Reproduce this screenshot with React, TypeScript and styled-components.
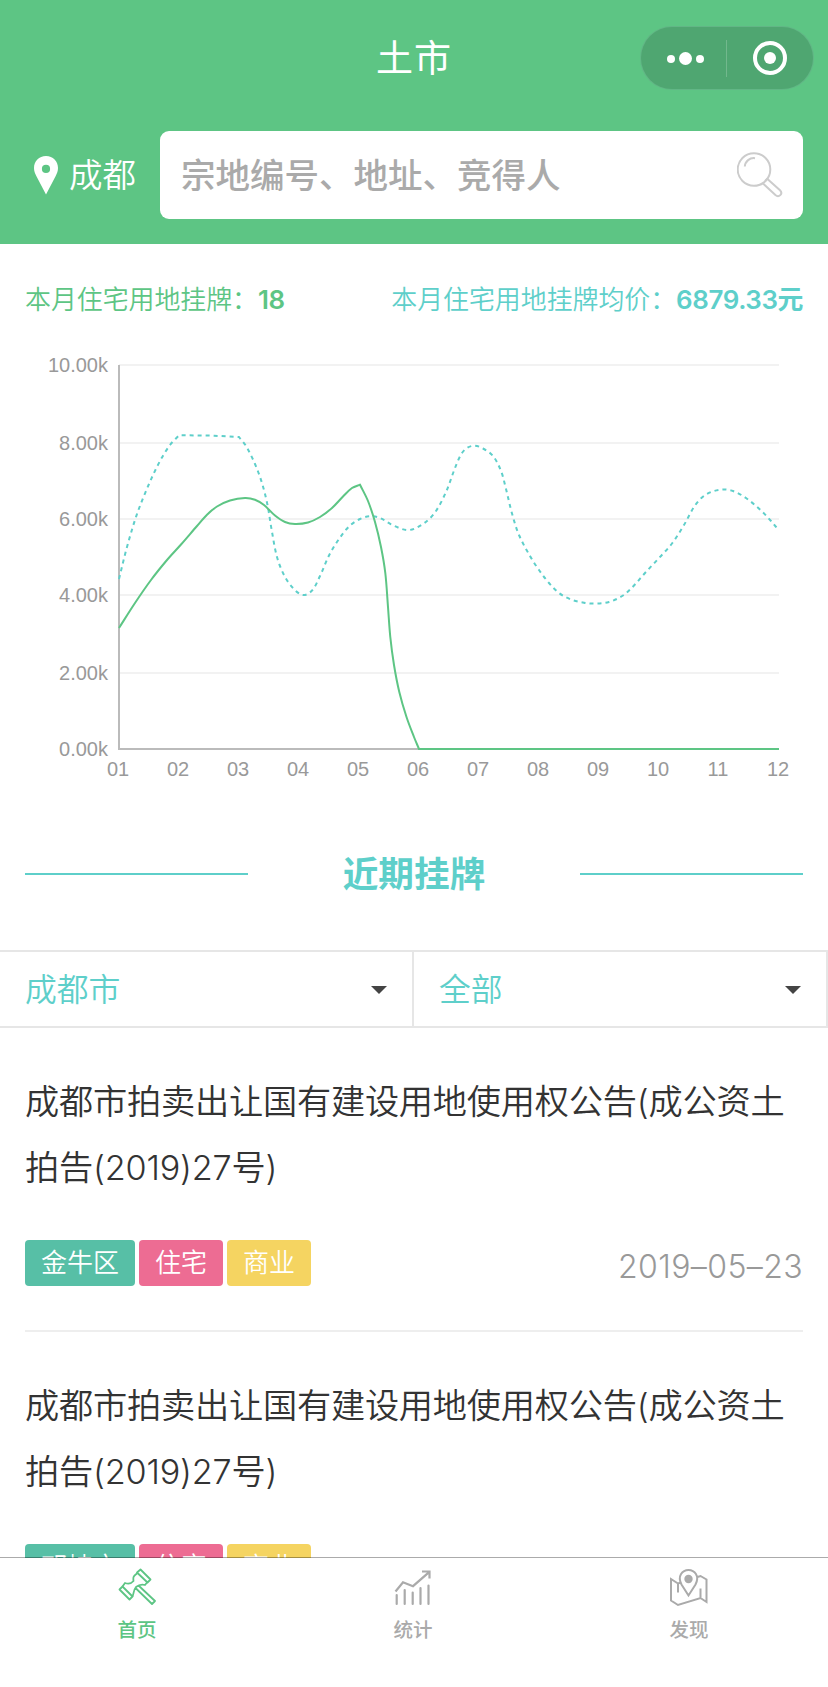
import React from 'react';
import styled, { createGlobalStyle } from 'styled-components';

const green = '#5dc584';
const teal = '#5ecfca';

const GlobalStyle = createGlobalStyle`
  * { box-sizing: border-box; }
  body {
    margin: 0;
    background: #fff;
    font-family: Inter, 'Noto Sans CJK SC', sans-serif;
    color: #333;
  }
`;

const Page = styled.div`
  height: 1687px;
  display: flex;
  flex-direction: column;
  overflow: hidden;
  background: #fff;
`;

const Header = styled.header`
  flex: none;
  height: 244px;
  background: ${green};
  color: #fff;
`;

const NavBar = styled.div`
  height: 131px;
  padding: 27px 15px 0;
  display: grid;
  grid-template-columns: 1fr auto 1fr;
`;

const NavTitle = styled.h1`
  grid-column: 2;
  margin: 0;
  font-size: 37px;
  font-weight: 400;
  letter-spacing: 1px;
  line-height: 64px;
`;

const Capsule = styled.div`
  justify-self: end;
  width: 172px;
  height: 62px;
  border-radius: 31px;
  background: #4fa671;
  box-shadow: 0 0 0 1px #62b686;
  display: grid;
  grid-template-columns: 86px 86px;
  align-items: center;
  justify-items: center;
`;

const SearchRow = styled.div`
  display: flex;
  align-items: center;
  height: 88px;
  padding-right: 25px;
`;

const Location = styled.div`
  width: 160px;
  padding: 0 0 0 33px;
  display: flex;
  align-items: center;
  gap: 10px;
  font-size: 33.5px;
  font-weight: 350;
  line-height: 44px;
`;

const SearchBox = styled.div`
  flex: 1;
  height: 88px;
  padding: 0 20px 0 21px;
  border-radius: 9px;
  background: #fff;
  display: flex;
  align-items: center;
  justify-content: space-between;
  color: #aaa;
  font-size: 34.5px;
  font-weight: 500;

  span { padding-bottom: 5px; }
`;

const Stats = styled.div`
  flex: none;
  height: 110px;
  padding: 0 25px;
  display: flex;
  justify-content: space-between;
  line-height: 112px;
  font-size: 25.9px;
`;

const Stat = styled.div<{ $color: string }>`
  color: ${p => p.$color};
  font-weight: 350;
  white-space: nowrap;

  b {
    font-weight: 600;
    letter-spacing: -0.4px;
  }
`;

const ChartSvg = styled.svg`
  flex: none;
  display: block;
  font-family: 'Liberation Sans', Arial, sans-serif;
  font-size: 20px;
  fill: #999;
`;

const SectionHeading = styled.div`
  flex: none;
  height: 156px;
  padding: 4px 25px 0;
  display: flex;
  align-items: center;
  justify-content: space-between;

  &::before, &::after {
    content: '';
    width: 223px;
    height: 2px;
    background: ${teal};
  }

  h2 {
    margin: 0;
    color: ${teal};
    font-size: 35.7px;
    font-weight: 700;
    line-height: 50px;
  }
`;

const Filters = styled.div`
  flex: none;
  height: 78px;
  display: grid;
  grid-template-columns: 1fr 1fr;
  border-top: 2px solid #e6e6e6;
  border-bottom: 2px solid #e6e6e6;
`;

const Filter = styled.div`
  padding: 0 25px;
  display: flex;
  align-items: center;
  justify-content: space-between;
  border-right: 2px solid #e6e6e6;
  color: ${teal};
  font-size: 31.8px;
  font-weight: 350;

  span { padding-bottom: 5px; }

  &::after {
    content: '';
    border: 8px solid transparent;
    border-top-color: #444;
    border-bottom: 0;
    margin-top: 2px;
  }
`;

const List = styled.div`
  flex: 1;
  min-height: 0;
  overflow: hidden;
  padding: 0 25px;
`;

const Item = styled.article`
  height: 304px;
  padding-top: 41px;
  border-bottom: 2px solid #eee;
`;

const ItemTitle = styled.h3`
  margin: 0;
  font-size: 34.2px;
  font-weight: 350;
  letter-spacing: -0.2px;
  line-height: 66px;
`;

const ItemFooter = styled.div`
  margin-top: 39px;
  display: flex;
  justify-content: space-between;
`;

const Tags = styled.div`
  display: flex;
  gap: 4px;
`;

const Tag = styled.span<{ $color: string }>`
  height: 46px;
  padding: 0 16px;
  border-radius: 4px;
  background: ${p => p.$color};
  color: #fff;
  font-size: 26px;
  font-weight: 350;
  line-height: 46px;
`;

const DateText = styled.time`
  color: #999;
  font-size: 32px;
  font-weight: 350;
  letter-spacing: 0.4px;
  line-height: 54px;
`;

const TabBar = styled.nav`
  flex: none;
  height: 130px;
  margin-top: -1px;
  position: relative;
  background: #fff;
  background-clip: padding-box;
  border-top: 1px solid rgba(0, 0, 0, 0.33);
  display: grid;
  grid-template-columns: repeat(3, 1fr);
`;

const Tab = styled.div<{ $active?: boolean }>`
  padding: 10px 2px 0 0;
  display: flex;
  flex-direction: column;
  align-items: center;
  gap: 8px;
  color: ${p => (p.$active ? green : '#aaa')};
  font-size: 19.5px;
  font-weight: 500;
  line-height: 28px;
`;

type Point = [number, number];

/* Each inner array is one smooth run; neighbouring runs meet in a corner. */
const countRuns: Point[][] = [
  [[119, 628], [135, 603], [151, 580], [167, 560], [181, 544.5], [197, 526], [207, 514.7], [217, 506.5], [230, 500.5], [245, 498], [255, 499.7], [264, 505], [275, 515.5], [285, 522], [295, 524], [308, 522.5], [320, 517], [332, 508], [343, 496.5], [352, 488], [360, 484.7]],
  [[360, 484.7], [368, 501], [375, 522], [381, 547], [385.3, 573], [388, 607], [390.3, 637], [394, 665], [399.3, 692], [406.5, 717], [414, 737], [419, 749]],
  [[419, 749], [779, 749]],
];

const priceRuns: Point[][] = [
  [[119, 579], [127, 547], [137, 514], [149, 484], [160, 461], [170, 445], [179, 435.3]],
  [[179, 435.3], [209, 435.6], [239, 437]],
  [[239, 437], [246, 446], [255, 464], [262, 483], [267.5, 505], [271.5, 529], [277, 557], [284, 575], [293, 588], [303, 595], [312, 590.5], [320, 576], [329, 555.5], [338, 540.5], [349, 526.5], [360, 519], [370, 516.2], [380, 518], [391, 524.3], [402, 529], [409, 530], [416, 528], [427, 521], [436, 511], [446, 492], [455, 468], [460.5, 455.5], [466, 448.7], [474, 445.7], [483, 448.5], [493, 456], [501, 471], [506, 489], [512, 513.5], [519, 535], [530, 556], [539, 570], [549, 583], [559, 593], [571, 599.5], [584, 602.7], [595, 603.6], [609, 602], [623, 595.5], [634, 585.5], [645, 573], [659, 558], [672, 543.5], [684, 525], [694, 507], [702, 497.5], [711, 492], [723, 489.5], [733, 491], [746, 498], [761, 510.5], [771, 521], [779, 530.5]],
];

const heading = (a: Point, b: Point): Point => {
  const length = Math.hypot(b[0] - a[0], b[1] - a[1]);
  return [(b[0] - a[0]) / length, (b[1] - a[1]) / length];
};

const smooth = (runs: Point[][]) =>
  `M${runs[0][0].join(' ')}` +
  runs
    .map(pts =>
      pts.slice(0, -1).map((p, i) => {
        const n = pts[i + 1];
        const from = heading(pts[i - 1] ?? p, n);
        const to = heading(p, pts[i + 2] ?? n);
        const reach = Math.hypot(n[0] - p[0], n[1] - p[1]) / 3;
        return `C${p[0] + from[0] * reach} ${p[1] + from[1] * reach} ${n[0] - to[0] * reach} ${n[1] - to[1] * reach} ${n[0]} ${n[1]}`;
      }).join('')
    )
    .join('');

const ticks: [string, number][] = [
  ['10.00k', 365], ['8.00k', 443], ['6.00k', 519], ['4.00k', 595], ['2.00k', 673], ['0.00k', 749],
];

const months = ['01', '02', '03', '04', '05', '06', '07', '08', '09', '10', '11', '12'];

const Chart = () => (
  <ChartSvg width="828" height="440" viewBox="0 354 828 440">
    {ticks.map(([label, y]) => (
      <g key={label}>
        <path d={`M119 ${y}H779`} stroke={y === 749 ? '#bbb' : '#f2f2f2'} strokeWidth="2" />
        <text x="108" y={y + 7} textAnchor="end">{label}</text>
      </g>
    ))}
    <path d="M119 365V750" stroke="#bbb" strokeWidth="2" />
    {months.map((m, i) => (
      <text key={m} x={118 + i * 60} y="776" textAnchor="middle">{m}</text>
    ))}
    <path d={smooth(priceRuns)} fill="none" stroke={teal} strokeWidth="2" strokeDasharray="4 4" />
    <path d={smooth(countRuns)} fill="none" stroke={green} strokeWidth="2" />
  </ChartSvg>
);

const PinIcon = () => (
  <svg width="26" height="40" viewBox="0 0 26 40">
    <path fill="#fff" fillRule="evenodd" d="M13 1C6 1 1 6.300 1 13c0 3 1 5.500 2.300 8L13 39.500 22.700 21C24 18.500 25 16 25 13 25 6.300 20 1 13 1Zm0 8.800a4.100 4.100 0 1 1 0 8.200 4.100 4.100 0 0 1 0-8.200Z" />
  </svg>
);

const DotsIcon = () => (
  <svg width="40" height="16" viewBox="0 0 40 16" fill="#fff">
    <circle cx="7" cy="9" r="4" /><circle cx="21.500" cy="8.500" r="6.500" /><circle cx="36" cy="9" r="4" />
  </svg>
);

const TargetIcon = () => (
  <svg width="36" height="36" viewBox="0 0 36 36">
    <circle cx="18" cy="18" r="15" fill="none" stroke="#fff" strokeWidth="4" />
    <circle cx="18" cy="18" r="6" fill="#fff" />
  </svg>
);

const CapsuleCell = styled.div<{ $divided?: boolean }>`
  width: 86px;
  height: 37px;
  display: flex;
  align-items: center;
  justify-content: center;
  border-right: ${p => (p.$divided ? '1px solid #72b88d' : '0')};
`;

const SearchIcon = () => (
  <svg width="46" height="46" viewBox="0 0 46 46" fill="none" stroke="#ccc" strokeWidth="2">
    <circle cx="17" cy="17.500" r="16.300" />
    <path d="M7.800 14.500A9 9 0 0 1 18 6.200M31 27.500 43 38.300c3.400 3.500-1.100 7.800-4.600 4.800L26 31.500M28 29l3-3" />
  </svg>
);

const GavelIcon = () => (
  <svg width="38" height="40" viewBox="0 0 38 40" fill="none" stroke="currentColor" strokeWidth="1.800" strokeLinejoin="round">
    <path d="M22.500 1.500 32.500 11.500 29.500 14.500 19 4.500ZM4.500 18.500 14.500 28.500 11.500 31.500 1.500 21.500Z" />
    <path d="M19.500 5C15 8.500 15 9 15.500 13 13 16 10 16 7 15L4.500 18.500M29 14.500 27 17C23 16 20.500 17 18 19 15.500 22 16 25 14.500 28.500M20.500 17.500 37 33 34 36 17.500 20" />
  </svg>
);

const StatsIcon = () => (
  <svg width="38" height="40" viewBox="0 -1 38 40" fill="none" stroke="currentColor" strokeWidth="2.200">
    <path d="M1.500 22.500 9 13.300 19 17.200 34.800 3.300M28 2.500H35.500V9.500" />
    <path strokeLinecap="round" d="M2.700 26V35M10.700 21V35M18.700 23.500V35M26.500 19V35M34.500 16.500V35" />
  </svg>
);

const MapIcon = () => (
  <svg width="40" height="40" viewBox="0 0 40 40" fill="none" stroke="currentColor" strokeWidth="2">
    <circle cx="19.500" cy="11" r="4.200" fill="currentColor" stroke="none" />
    <path d="M19.500 27.500 12.500 16.500C8 8 13.500 2 19.500 2S31 8 26.500 16.500ZM12 14.500 9 15.500 2 11V32.500L9 37 31.500 30 37.500 34V11.500L31.500 8 28.500 9M9 15.500V24.500M31.500 20.500V30" />
  </svg>
);

const items = [
  { title: '成都市拍卖出让国有建设用地使用权公告(成公资土拍告(2019)27号)', district: '金牛区', date: '2019–05–23' },
  { title: '成都市拍卖出让国有建设用地使用权公告(成公资土拍告(2019)27号)', district: '邛崃市', date: '2019–05–23' },
];

export default function App() {
  return (
    <Page>
      <GlobalStyle />
      <Header>
        <NavBar>
          <NavTitle>土市</NavTitle>
          <Capsule>
            <CapsuleCell $divided><DotsIcon /></CapsuleCell>
            <CapsuleCell><TargetIcon /></CapsuleCell>
          </Capsule>
        </NavBar>
        <SearchRow>
          <Location><PinIcon />成都</Location>
          <SearchBox><span>宗地编号、地址、竞得人</span><SearchIcon /></SearchBox>
        </SearchRow>
      </Header>
      <Stats>
        <Stat $color={green}>本月住宅用地挂牌：<b>18</b></Stat>
        <Stat $color={teal}>本月住宅用地挂牌均价：<b>6879.33元</b></Stat>
      </Stats>
      <Chart />
      <SectionHeading><h2>近期挂牌</h2></SectionHeading>
      <Filters>
        <Filter><span>成都市</span></Filter>
        <Filter><span>全部</span></Filter>
      </Filters>
      <List>
        {items.map(item => (
          <Item key={item.district}>
            <ItemTitle>{item.title}</ItemTitle>
            <ItemFooter>
              <Tags>
                <Tag $color="#57bfa6">{item.district}</Tag>
                <Tag $color="#ed6c93">住宅</Tag>
                <Tag $color="#f5d461">商业</Tag>
              </Tags>
              <DateText>{item.date}</DateText>
            </ItemFooter>
          </Item>
        ))}
      </List>
      <TabBar>
        <Tab $active><GavelIcon />首页</Tab>
        <Tab><StatsIcon />统计</Tab>
        <Tab><MapIcon />发现</Tab>
      </TabBar>
    </Page>
  );
}
